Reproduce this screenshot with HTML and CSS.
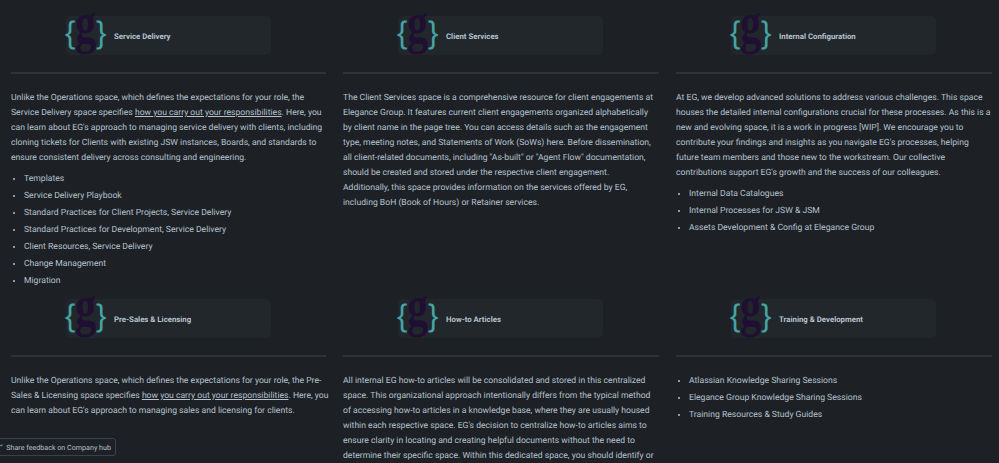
FILE: index.html
```html
<!DOCTYPE html>
<html lang="en">

<head>
  <meta charset="UTF-8">
  <title>Company hub</title>
  <link rel="stylesheet" href="styles.css">
</head>

<body>
  <div class="hub">
    <div class="row row-top">
      <section class="col">
        <a class="card">
          <svg class="logo" viewBox="0 0 44 39"><text class="brace" x="-1" y="27">{</text><text class="brace" x="30" y="27">}</text><text class="g" transform="translate(9 26) scale(.74 1)">g</text></svg>
          <span class="card-title">Service Delivery</span>
        </a>
        <hr>
        <p>Unlike the Operations space, which defines the expectations for your role, the Service Delivery space specifies <u>how you carry out your responsibilities</u>. Here, you can learn about EG's approach to managing service delivery with clients, including cloning tickets for Clients with existing JSW instances, Boards, and standards to ensure consistent delivery across consulting and engineering.</p>
        <ul>
          <li>Templates</li>
          <li>Service Delivery Playbook</li>
          <li>Standard Practices for Client Projects, Service Delivery</li>
          <li>Standard Practices for Development, Service Delivery</li>
          <li>Client Resources, Service Delivery</li>
          <li>Change Management</li>
          <li>Migration</li>
        </ul>
      </section>
      <section class="col">
        <a class="card">
          <svg class="logo" viewBox="0 0 44 39"><text class="brace" x="-1" y="27">{</text><text class="brace" x="30" y="27">}</text><text class="g" transform="translate(9 26) scale(.74 1)">g</text></svg>
          <span class="card-title">Client Services</span>
        </a>
        <hr>
        <p>The Client Services space is a comprehensive resource for client engagements at Elegance Group. It features current client engagements organized alphabetically by client name in the page tree. You can access details such as the engagement type, meeting notes, and Statements of Work (SoWs) here. Before dissemination, all client-related documents, including "As-built" or "Agent Flow" documentation, should be created and stored under the respective client engagement.<br>Additionally, this space provides information on the services offered by EG, including BoH (Book of Hours) or Retainer services.</p>
      </section>
      <section class="col">
        <a class="card">
          <svg class="logo" viewBox="0 0 44 39"><text class="brace" x="-1" y="27">{</text><text class="brace" x="30" y="27">}</text><text class="g" transform="translate(9 26) scale(.74 1)">g</text></svg>
          <span class="card-title">Internal Configuration</span>
        </a>
        <hr>
        <p>At EG, we develop advanced solutions to address various challenges. This space houses the detailed internal configurations crucial for these processes. As this is a new and evolving space, it is a work in progress [WIP]. We encourage you to contribute your findings and insights as you navigate EG's processes, helping future team members and those new to the workstream. Our collective contributions support EG's growth and the success of our colleagues.</p>
        <ul>
          <li>Internal Data Catalogues</li>
          <li>Internal Processes for JSW &amp; JSM</li>
          <li>Assets Development &amp; Config at Elegance Group</li>
        </ul>
      </section>
    </div>
    <div class="row">
      <section class="col">
        <a class="card">
          <svg class="logo" viewBox="0 0 44 39"><text class="brace" x="-1" y="27">{</text><text class="brace" x="30" y="27">}</text><text class="g" transform="translate(9 26) scale(.74 1)">g</text></svg>
          <span class="card-title">Pre-Sales &amp; Licensing</span>
        </a>
        <hr>
        <p class="wide">Unlike the Operations space, which defines the expectations for your role, the Pre-Sales &amp; Licensing space specifies <u>how you carry out your responsibilities</u>. Here, you can learn about EG's approach to managing sales and licensing for clients.</p>
      </section>
      <section class="col">
        <a class="card">
          <svg class="logo" viewBox="0 0 44 39"><text class="brace" x="-1" y="27">{</text><text class="brace" x="30" y="27">}</text><text class="g" transform="translate(9 26) scale(.74 1)">g</text></svg>
          <span class="card-title">How-to Articles</span>
        </a>
        <hr>
        <p>All internal EG how-to articles will be consolidated and stored in this centralized space. This organizational approach intentionally differs from the typical method of accessing how-to articles in a knowledge base, where they are usually housed within each respective space. EG's decision to centralize how-to articles aims to ensure clarity in locating and creating helpful documents without the need to determine their specific space. Within this dedicated space, you should identify or</p>
      </section>
      <section class="col">
        <a class="card">
          <svg class="logo" viewBox="0 0 44 39"><text class="brace" x="-1" y="27">{</text><text class="brace" x="30" y="27">}</text><text class="g" transform="translate(9 26) scale(.74 1)">g</text></svg>
          <span class="card-title">Training &amp; Development</span>
        </a>
        <hr>
        <ul class="list-only">
          <li>Atlassian Knowledge Sharing Sessions</li>
          <li>Elegance Group Knowledge Sharing Sessions</li>
          <li>Training Resources &amp; Study Guides</li>
        </ul>
      </section>
    </div>
  </div>
  <button class="feedback"><span class="feedback-icon">“</span> Share feedback on Company hub</button>
</body>

</html>
```

FILE: styles.css
```css
* {
  box-sizing: border-box;
}

html,
body {
  height: 463px;
  overflow: hidden;
}

body {
  margin: 0;
  background: #1d2125;
  color: #b6c2cf;
  font-family: Roboto, Lato, sans-serif;
  font-size: 8.62px;
  line-height: 15px;
  text-rendering: geometricPrecision;
}

.hub {
  padding: 16px 8px 0 11px;
}

.row {
  display: grid;
  grid-template-columns: 315px 316px 316px;
  column-gap: 17px;
}

.row-top {
  height: 283px;
}

.col {
  min-width: 0;
}

.card {
  display: flex;
  align-items: center;
  width: 205px;
  height: 39px;
  margin-left: 55px;
  background: #22272b;
  border-radius: 5px;
}

.logo {
  width: 44px;
  height: 39px;
  flex: none;
  overflow: visible;
}

.brace {
  fill: #47a3a3;
  font-family: "Liberation Sans", sans-serif;
  font-size: 31px;
}

.g {
  fill: #1f0f33;
  font-family: "Liberation Serif", serif;
  font-size: 57px;
  font-weight: 700;
}

.card-title {
  margin: 1px 0 0 4px;
  font-size: 7.8px;
  font-weight: 700;
}

hr {
  height: 2px;
  margin: 17px 0 17px;
  border: 0;
  background: #2c333a;
}

p {
  margin: 0;
}

.wide {
  margin-right: -4px;
}

ul {
  margin: 4.5px 0 0;
  padding-left: 13px;
}

.list-only {
  margin-top: -1px;
}

li {
  padding: 1px 0;
}

.feedback {
  position: fixed;
  left: -8px;
  bottom: 7px;
  height: 18px;
  padding: 0 4px 0 7px;
  background: #1d2125;
  border: 1px solid #3a4249;
  border-radius: 3px;
  color: #b6c2cf;
  font-family: Roboto, sans-serif;
  font-size: 7.15px;
  text-rendering: geometricPrecision;
}

.feedback-icon {
  margin-right: 2px;
}
```
